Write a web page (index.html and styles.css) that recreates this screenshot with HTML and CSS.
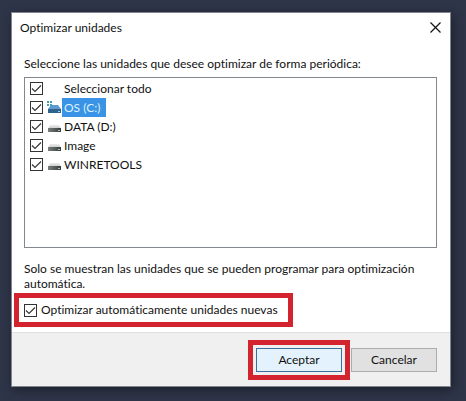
FILE: index.html
```
<!DOCTYPE html>
<html lang="es">
<head>
    <meta charset="UTF-8">
    <meta name="viewport" content="width=device-width, initial-scale=1.0">
    <title>Optimizar unidades</title>
    <link rel="stylesheet" href="styles.css">
</head>
<body>

<!-- Degradados y dibujo compartido de las unidades -->
<svg class="defs" width="0" height="0" aria-hidden="true">
    <defs>
        <linearGradient id="top" x1="0" y1="0" x2="0" y2="1">
            <stop offset="0" stop-color="#ececec"/>
            <stop offset="1" stop-color="#c4c6c6"/>
        </linearGradient>
        <linearGradient id="front" x1="0" y1="0" x2="1" y2="0">
            <stop offset="0" stop-color="#7b7e7e"/>
            <stop offset="1" stop-color="#363c3c"/>
        </linearGradient>
        <symbol id="drive" viewBox="0 0 14 16">
            <path d="M3 6h9l2 4H1z" fill="url(#top)"/>
            <rect x="1" y="9" width="13" height="4" fill="url(#front)"/>
            <rect x="11" y="11" width="2" height="1" fill="#8fd6a6"/>
        </symbol>
    </defs>
</svg>

<div class="dialog">
    <div class="title-bar">
        <span class="title">Optimizar unidades</span>
        <button class="close" aria-label="Cerrar">
            <svg width="11" height="11" viewBox="0 0 11 11">
                <path d="M0.5 0.5l10 10M10.5 0.5l-10 10" stroke="#111" stroke-width="1.2" fill="none"/>
            </svg>
        </button>
    </div>

    <div class="content">
        <div class="heading">Seleccione las unidades que desee optimizar de forma periódica:</div>

        <div class="drive-list">
            <label class="drive">
                <input type="checkbox" checked>
                <span class="icon"></span>
                <span class="name">Seleccionar todo</span>
            </label>
            <label class="drive selected">
                <input type="checkbox" checked>
                <svg class="icon" viewBox="0 0 14 16">
                    <path d="M4 5h7l3 4H1z" fill="#5b9bd0"/>
                    <rect x="1" y="9" width="13" height="4" fill="#2f628f"/>
                    <rect x="11" y="11" width="2" height="1" fill="#8fe0e6"/>
                    <path d="M0 1h2v2H0zM3 1h2v2H3zM0 4h2v2H0zM3 4h2v2H3z" fill="#3f9fb5"/>
                </svg>
                <span class="name">OS (C:)</span>
            </label>
            <label class="drive">
                <input type="checkbox" checked>
                <svg class="icon"><use href="#drive"/></svg>
                <span class="name">DATA (D:)</span>
            </label>
            <label class="drive">
                <input type="checkbox" checked>
                <svg class="icon"><use href="#drive"/></svg>
                <span class="name">Image</span>
            </label>
            <label class="drive">
                <input type="checkbox" checked>
                <svg class="icon"><use href="#drive"/></svg>
                <span class="name">WINRETOOLS</span>
            </label>
        </div>

        <div class="note">Solo se muestran las unidades que se pueden programar para optimización automática.</div>

        <label class="auto-option highlight">
            <input type="checkbox" checked>
            <span>Optimizar automáticamente unidades nuevas</span>
        </label>
    </div>

    <div class="footer">
        <div class="highlight">
            <button class="button primary">Aceptar</button>
        </div>
        <button class="button">Cancelar</button>
    </div>
</div>

</body>
</html>
```
FILE: styles.css
```
* {
    box-sizing: border-box;
}

body {
    margin: 0;
    padding: 12px 15px 14px 11px;
    background: #2e3548;
    color: #111;
    font-family: Lato, "Open Sans", sans-serif;
    font-size: 12px;
    font-variant-ligatures: none;
    line-height: 16px;
}

.defs {
    position: absolute;
}

.dialog {
    background: #fff;
    border: 1px solid #81868e;
    box-shadow: 2px 3px 10px rgba(0, 0, 0, 0.4);
}

.title-bar {
    display: flex;
    justify-content: space-between;
    align-items: center;
    height: 29px;
    padding: 0 9px 0 8px;
}

.close {
    display: flex;
    padding: 0;
    border: none;
    background: none;
}

.content {
    padding: 14px 13px 5px 12px;
}

.heading {
    margin-bottom: 5px;
}

.drive-list {
    height: 171px;
    padding: 1px 5px;
    border: 1px solid #828790;
}

.drive {
    display: flex;
    align-items: center;
    height: 19px;
}

input[type="checkbox"] {
    appearance: none;
    flex: none;
    width: 13px;
    height: 13px;
    margin: 0;
    border: 1px solid #333;
    background: #fff url("data:image/svg+xml,%3Csvg xmlns='http://www.w3.org/2000/svg' viewBox='0 0 11 11'%3E%3Cpath d='M1 5.5L4 8.5L10 2.5' fill='none' stroke='%23333' stroke-width='1.1'/%3E%3C/svg%3E");
}

.icon {
    flex: none;
    width: 14px;
    height: 16px;
    margin: 0 1px 0 4px;
}

.name {
    padding: 0 6px 0 2px;
    line-height: 19px;
}

.selected .name {
    background: #3a93e4;
    color: #d9f2ff;
}

.note {
    margin-top: 13px;
    line-height: 15px;
}

/* Marco rojo de la guía */
.highlight {
    border: 5px solid #d2232f;
}

.auto-option {
    display: flex;
    align-items: center;
    gap: 4px;
    width: fit-content;
    height: 34px;
    margin: 2px 0 0 -10px;
    padding: 0 10px 0 5px;
}

.footer {
    display: flex;
    justify-content: flex-end;
    align-items: center;
    gap: 1px;
    padding: 7px 13px 6px;
    border-top: 1px solid #dfdfdf;
    background: #f0f0f0;
}

.footer .highlight {
    padding: 3px;
}

.button {
    display: block;
    width: 86px;
    height: 24px;
    padding: 0;
    border: 1px solid #adadad;
    background: #e1e1e1;
    color: #111;
    font: inherit;
}

.primary {
    border-color: #3c6e9c;
    background: #e3f2fc;
}
```
